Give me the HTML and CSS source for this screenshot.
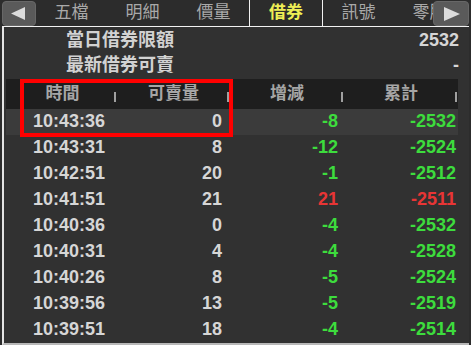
FILE: index.html
```html
<!DOCTYPE html>
<html lang="zh-Hant">
<head>
    <meta charset="UTF-8">
    <meta name="viewport" content="width=device-width, initial-scale=1.0">
    <title>借券</title>
    <link rel="stylesheet" href="styles.css">
</head>
<body>
    <div class="screen">
        <div class="tabbar">
            <button class="nav nav-prev" aria-label="prev">
                <svg width="14" height="13" viewBox="0 0 14 13"><polygon points="0,6.5 14,0 14,13" fill="#dcdcdc"/></svg>
            </button>
            <div class="tab">五檔</div>
            <div class="tab">明細</div>
            <div class="tab">價量</div>
            <div class="tab active">借券</div>
            <div class="tab">訊號</div>
            <div class="tab">零股</div>
            <button class="nav nav-next" aria-label="next">
                <svg width="16" height="14" viewBox="0 0 16 14"><polygon points="16,7 0,0 0,14" fill="#dcdcdc"/></svg>
            </button>
        </div>

        <div class="panel">
            <div class="info">
                <div class="info-row"><span class="info-label">當日借券限額</span><span class="info-value">2532</span></div>
                <div class="info-row"><span class="info-label">最新借券可賣</span><span class="info-value">-</span></div>
            </div>

            <div class="table">
                <div class="thead">
                    <div class="th">時間</div>
                    <div class="th">可賣量</div>
                    <div class="th">增減</div>
                    <div class="th">累計</div>
                </div>
                <div class="trow current"><span class="c-time">10:43:36</span><span class="c-qty">0</span><span class="c-chg down">-8</span><span class="c-sum down">-2532</span></div>
                <div class="trow"><span class="c-time">10:43:31</span><span class="c-qty">8</span><span class="c-chg down">-12</span><span class="c-sum down">-2524</span></div>
                <div class="trow"><span class="c-time">10:42:51</span><span class="c-qty">20</span><span class="c-chg down">-1</span><span class="c-sum down">-2512</span></div>
                <div class="trow"><span class="c-time">10:41:51</span><span class="c-qty">21</span><span class="c-chg up">21</span><span class="c-sum up">-2511</span></div>
                <div class="trow"><span class="c-time">10:40:36</span><span class="c-qty">0</span><span class="c-chg down">-4</span><span class="c-sum down">-2532</span></div>
                <div class="trow"><span class="c-time">10:40:31</span><span class="c-qty">4</span><span class="c-chg down">-4</span><span class="c-sum down">-2528</span></div>
                <div class="trow"><span class="c-time">10:40:26</span><span class="c-qty">8</span><span class="c-chg down">-5</span><span class="c-sum down">-2524</span></div>
                <div class="trow"><span class="c-time">10:39:56</span><span class="c-qty">13</span><span class="c-chg down">-5</span><span class="c-sum down">-2519</span></div>
                <div class="trow"><span class="c-time">10:39:51</span><span class="c-qty">18</span><span class="c-chg down">-4</span><span class="c-sum down">-2514</span></div>

                <div class="mark-box"></div>
            </div>
        </div>
    </div>
</body>
</html>
```

FILE: styles.css
```css
* {
    box-sizing: border-box;
}

body {
    margin: 0;
    background: #2c2c2c;
    font-family: 'Liberation Sans', 'Noto Sans CJK TC', sans-serif;
    color: #d6d6d6;
}

.screen {
    width: 471px;
    height: 345px;
    overflow: hidden;
    background: #2c2c2c;
}

/* tab bar */
.tabbar {
    position: relative;
    display: flex;
    height: 26px;
    overflow: hidden;
}

.nav {
    display: flex;
    align-items: center;
    justify-content: center;
    width: 34px;
    height: 25px;
    margin-top: 1px;
    padding: 0;
    border: 1px solid #676767;
    border-radius: 4px;
    background: #5a5a5a;
    cursor: pointer;
}

.nav-prev {
    flex: none;
    margin-left: 2px;
    padding-right: 3px;
}

.nav-next {
    position: absolute;
    top: 0;
    left: 433px;
    width: 36px;
    padding-left: 2px;
}

.tab {
    flex: none;
    width: 71px;
    line-height: 26px;
    text-align: center;
    font-size: 17px;
    color: #a9a9a9;
}

.tab.active {
    width: 74px;
    border-left: 1px solid #f2f2f2;
    border-right: 1px solid #f2f2f2;
    color: #eeee55;
    font-weight: bold;
}

/* panel */
.panel {
    height: 319px;
    margin: 0 2px;
    border-top: 1px solid #f2f2f2;
    border-left: 2px solid #e4e4e4;
    border-bottom: 2px solid #b8b8b8;
    background: #313131;
}

.info {
    padding-top: 1px;
    height: 52px;
}

.info-row {
    display: flex;
    justify-content: space-between;
    height: 25px;
    line-height: 25px;
    padding: 0 10px 0 62px;
    font-size: 18px;
    font-weight: bold;
}

.info-label {
    color: #d2d2d2;
}

.info-value {
    color: #d6d6d6;
}

/* table */
.table {
    position: relative;
    margin-left: 2px;
}

.thead,
.trow {
    display: grid;
    grid-template-columns: 109px 113px 114px 114px 2px;
    width: 452px;
}

.thead {
    height: 30px;
    background: #1e1e1e;
}

.th {
    position: relative;
    line-height: 30px;
    padding-left: 4px;
    text-align: center;
    font-size: 17px;
    font-weight: bold;
    color: #a6a6a6;
}

.th::after {
    content: '';
    position: absolute;
    right: -1px;
    top: 13px;
    width: 2px;
    height: 10px;
    background: #a0a0a0;
}

.trow {
    height: 26px;
    line-height: 25px;
    font-size: 18px;
    font-weight: bold;
    text-align: right;
}

.trow.current {
    background: #3b3b3b;
}

.c-time {
    padding-right: 10px;
}

.c-qty {
    padding-right: 6px;
}

.c-chg {
    padding-right: 4px;
}

.c-sum {
    padding-right: 0;
}

.down {
    color: #3ddc3d;
}

.up {
    color: #e83535;
}

.mark-box {
    position: absolute;
    left: 14px;
    top: 0;
    width: 213px;
    height: 58px;
    border: 4px solid #ff0000;
}
```
